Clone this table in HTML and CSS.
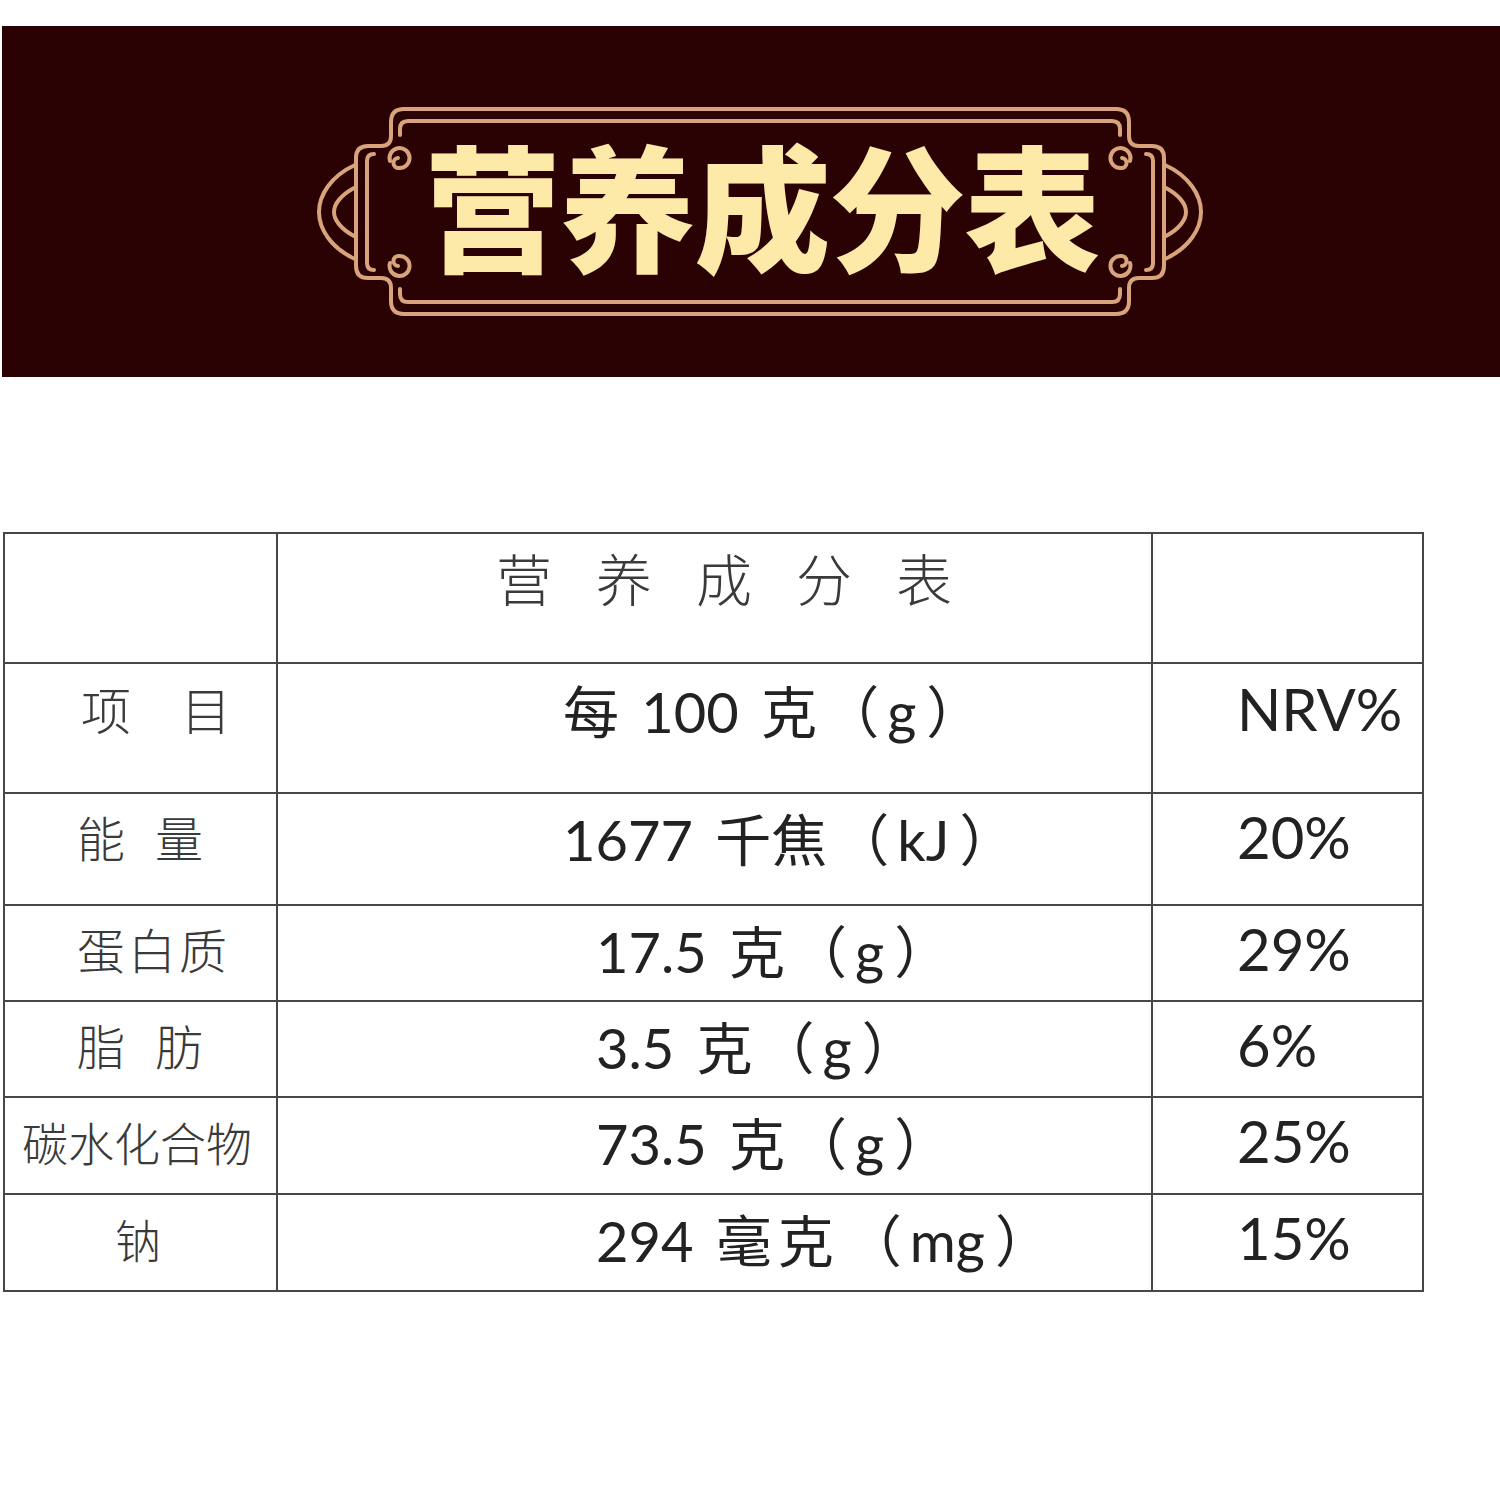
FILE: index.html
```html
<!DOCTYPE html>
<html lang="zh-CN">
<head>
<meta charset="utf-8">
<title>营养成分表</title>
<link rel="stylesheet" href="styles.css">
</head>
<body>
<header class="banner">
  <svg class="frame" viewBox="2 26 1498 351" width="1498" height="351" aria-hidden="true">
    <defs>
      <g id="half" fill="none" stroke="#d9a47b" stroke-width="4" stroke-linecap="round" stroke-linejoin="round">
        <path d="M760,109 H404 Q391,109 391,122 V136 Q391,146 381,146 H368 Q356,146 356,158 V266 Q356,278 368,278 H381 Q391,278 391,288 V301 Q391,314 404,314 H760"/>
        <path d="M760,121 H408 Q400,121 400,129 V135"/>
        <path d="M760,302 H408 Q400,302 400,294 V289"/>
        <path d="M374,154 Q367,154 367,161 V263 Q367,270 374,270"/>
        <path d="M355,165 C331,176 319,195 319,212 C319,229 331,248 355,259"/>
        <path d="M354,188 C341,195 334,204 334,212 C334,220 341,229 354,236"/>
        <path d="M390,161 A10,10 0 1 1 399,168 A5,5 0 0 1 398,158"/>
        <path d="M390,263 A10,10 0 1 0 399,256 A5,5 0 0 0 398,266"/>
      </g>
    </defs>
    <use href="#half"/>
    <use href="#half" transform="translate(1520 0) scale(-1 1)"/>
  </svg>
  <h1 class="banner-title">营养成分表</h1>
</header>

<table class="nutri">
  <colgroup>
    <col class="c-label">
    <col class="c-value">
    <col class="c-nrv">
  </colgroup>
  <tr class="row row-title">
    <td class="label"></td>
    <td class="value title-cell">营养成分表</td>
    <td class="nrv"></td>
  </tr>
  <tr class="row row-head">
    <td class="label label-wide">项　目</td>
    <td class="value value-early">每 100 克<span class="unit">（<span class="sym">g</span>）</span></td>
    <td class="nrv">NRV%</td>
  </tr>
  <tr class="row row-energy">
    <td class="label label-pair">能量</td>
    <td class="value value-early">1677 千焦<span class="unit">（<span class="sym">kJ</span>）</span></td>
    <td class="nrv">20%</td>
  </tr>
  <tr class="row row-std">
    <td class="label label-tri">蛋白质</td>
    <td class="value">17.5 克<span class="unit">（<span class="sym">g</span>）</span></td>
    <td class="nrv">29%</td>
  </tr>
  <tr class="row row-std">
    <td class="label label-pair">脂肪</td>
    <td class="value">3.5 克<span class="unit">（<span class="sym">g</span>）</span></td>
    <td class="nrv">6%</td>
  </tr>
  <tr class="row row-std2">
    <td class="label label-five">碳水化合物</td>
    <td class="value">73.5 克<span class="unit">（<span class="sym">g</span>）</span></td>
    <td class="nrv">25%</td>
  </tr>
  <tr class="row row-std2">
    <td class="label label-one">钠</td>
    <td class="value">294 <span class="cjk-wide">毫克</span><span class="unit">（<span class="sym">mg</span>）</span></td>
    <td class="nrv">15%</td>
  </tr>
</table>
</body>
</html>
```

FILE: styles.css
```css
html, body {
  margin: 0;
  padding: 0;
  background: #ffffff;
}

body {
  font-family: Lato, "Noto Sans CJK SC", sans-serif;
}

.banner {
  position: relative;
  margin: 26px 0 0 2px;
  width: 1498px;
  height: 351px;
  background: #2a0204;
  display: flex;
  align-items: center;
  justify-content: center;
  box-sizing: border-box;
  padding: 2px 0 0 22px;
}

.frame {
  position: absolute;
  left: 0;
  top: 0;
  display: block;
}

.banner-title {
  position: relative;
  margin: 0;
  font-family: "Noto Sans CJK SC", sans-serif;
  font-weight: 900;
  font-size: 136px;
  line-height: 1;
  letter-spacing: -1px;
  color: #fde9a8;
}

.nutri {
  margin: 155px 0 0 3px;
  border-collapse: collapse;
  table-layout: fixed;
  width: 1419px;
}

.c-label { width: 273px; }
.c-value { width: 875px; }
.c-nrv { width: 271px; }

.nutri td {
  border: 2px solid #474747;
  padding: 0;
  vertical-align: middle;
  white-space: nowrap;
}

.row-title td { height: 84px; padding-bottom: 44px; }
.row-head td { height: 88px; padding-bottom: 40px; }
.row-energy td { height: 84px; padding-bottom: 26px; }
.row-std td { height: 84px; padding-bottom: 10px; }
.row-std2 td { height: 85px; padding-bottom: 10px; }

.label {
  font-family: "Noto Sans CJK SC", sans-serif;
  font-weight: 300;
  font-size: 48px;
  color: #3a3a3a;
  padding-left: 72px !important;
}

.label-wide { font-size: 50px; padding-left: 76px !important; }
.label-pair { letter-spacing: 30px; }
.label-tri { letter-spacing: 3px; }
.label-five { font-size: 46px; padding-left: 17px !important; }
.label-one { font-size: 46px; padding-left: 110px !important; }

.value {
  font-size: 56px;
  color: #222222;
  word-spacing: 8px;
  padding-left: 318px !important;
}

.value-early { padding-left: 285px !important; }

.unit {
  margin-left: 6px;
}

.sym {
  padding: 0 10px 0 8px;
}

.cjk-wide {
  letter-spacing: 6px;
}

.title-cell {
  font-family: "Noto Sans CJK SC", sans-serif;
  font-weight: 300;
  font-size: 56px;
  letter-spacing: 44px;
  color: #3a3a3a;
  padding-left: 218px !important;
}

.nrv {
  font-size: 58px;
  color: #222222;
  padding-left: 84px !important;
}
```
